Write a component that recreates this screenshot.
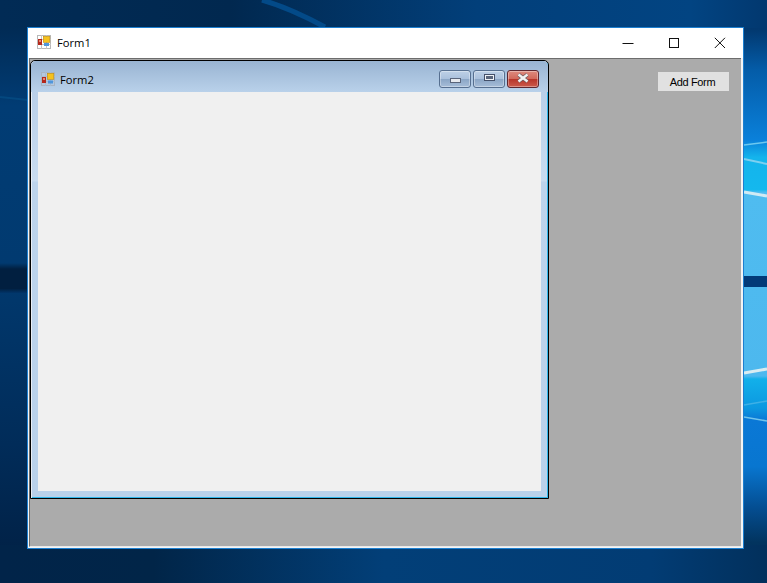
<div class="desktop">
  <svg class="wallpaper" width="767" height="583" viewBox="0 0 767 583" aria-hidden="true">
    <defs>
      <linearGradient id="base" x1="0" y1="0" x2="1" y2="0">
        <stop offset="0" stop-color="#012b55" />
        <stop offset="0.3" stop-color="#01284f" />
        <stop offset="0.62" stop-color="#023f7a" />
        <stop offset="0.9" stop-color="#024482" />
        <stop offset="1" stop-color="#02386f" />
      </linearGradient>
      <linearGradient id="left" x1="0" y1="0" x2="0" y2="1">
        <stop offset="0" stop-color="#012b55" />
        <stop offset="0.14" stop-color="#013c74" />
        <stop offset="0.42" stop-color="#013a70" />
        <stop offset="0.75" stop-color="#012c59" />
        <stop offset="1" stop-color="#011f42" />
      </linearGradient>
      <linearGradient id="band" x1="0" y1="0" x2="0" y2="1">
        <stop offset="0" stop-color="#013a70" />
        <stop offset="0.2" stop-color="#011f40" />
        <stop offset="0.85" stop-color="#011f40" />
        <stop offset="1" stop-color="#013468" />
      </linearGradient>
      <linearGradient id="bottom" x1="0" y1="0" x2="1" y2="0">
        <stop offset="0" stop-color="#012449" />
        <stop offset="0.2" stop-color="#012548" />
        <stop offset="0.5" stop-color="#023f78" />
        <stop offset="0.85" stop-color="#023c74" />
        <stop offset="1" stop-color="#02305c" />
      </linearGradient>
      <linearGradient id="right" x1="0" y1="0" x2="0" y2="1">
        <stop offset="0" stop-color="#02386f" />
        <stop offset="0.05" stop-color="#02386f" />
        <stop offset="0.12" stop-color="#045ca8" />
        <stop offset="0.24" stop-color="#0a80da" />
        <stop offset="0.27" stop-color="#14b4ec" />
        <stop offset="0.325" stop-color="#14b8ee" />
        <stop offset="0.33" stop-color="#4fbcf0" />
        <stop offset="0.645" stop-color="#4db8ee" />
        <stop offset="0.65" stop-color="#12b0ea" />
        <stop offset="0.7" stop-color="#0c98e0" />
        <stop offset="0.72" stop-color="#0a78d6" />
        <stop offset="0.8" stop-color="#0876d0" />
        <stop offset="0.87" stop-color="#044e92" />
        <stop offset="0.93" stop-color="#02345f" />
        <stop offset="1" stop-color="#012a55" />
      </linearGradient>
    </defs>
    <rect y="28" width="30" height="555" fill="url(#left)" />
    <rect y="263" width="30" height="30" fill="url(#band)" />
    <rect x="740" y="0" width="27" height="583" fill="url(#right)" />
    <rect x="740" y="276" width="27" height="11" fill="#023a78" />
    <rect y="545" width="767" height="38" fill="url(#bottom)" />
    <rect width="767" height="28" fill="url(#base)" />
    <path d="M0 97 L28 100" stroke="#04487f" stroke-width="2" fill="none" />
    <path d="M262 0 Q 290 8 325 27" stroke="#034a88" stroke-width="5" fill="none" />
    <path d="M744 145 L767 142" stroke="#6cc8f0" stroke-width="1.5" fill="none" />
    <path d="M744 159 L767 164" stroke="#7cd0f0" stroke-width="2" fill="none" />
    <path d="M744 192 L767 196" stroke="#d0eaf4" stroke-width="3" fill="none" />
    <path d="M744 373 L767 369" stroke="#d8ecf2" stroke-width="3" fill="none" />
    <path d="M744 405 L767 401" stroke="#3eb0e6" stroke-width="1.5" fill="none" />
    <path d="M744 417 L767 421" stroke="#70c4ec" stroke-width="1.5" fill="none" />
  </svg>

  <section class="window">
    <header class="titlebar">
      <svg class="icon main-icon" width="14" height="14" viewBox="0 0 14 14" aria-hidden="true">
        <rect x="0.5" y="0.5" width="13" height="13" fill="#fff" stroke="#b8b8b8" />
        <path d="M0 4.5H14M0 9.5H14M4.5 0V14M9.5 0V14" stroke="#c4c4c4" />
        <rect x="1" y="4" width="4" height="6" fill="#b5281c" />
        <rect x="2" y="5" width="2" height="2" fill="#e88a70" />
        <rect x="6.3" y="1.3" width="6.5" height="6" fill="#f5c21e" stroke="#c08a10" stroke-width="0.6" />
        <rect x="7" y="8" width="5" height="3" fill="#4f96dc" />
      </svg>
      <span class="title">Form1</span>
      <div class="caption">
        <span class="cap"><svg width="12" height="12" viewBox="0 0 12 12"><path d="M0.5 6.5H11.5" stroke="#111" /></svg></span>
        <span class="cap"><svg width="12" height="12" viewBox="0 0 12 12"><rect x="1.5" y="1.5" width="9" height="9" fill="none" stroke="#111" /></svg></span>
        <span class="cap"><svg width="12" height="12" viewBox="0 0 12 12"><path d="M0.8 0.8L11 11M11 0.8L0.8 11" stroke="#111" /></svg></span>
      </div>
    </header>
    <div class="mdi">
      <button class="add" type="button">Add Form</button>
      <section class="child">
        <header class="child-title">
          <svg class="icon" width="14" height="14" viewBox="0 0 14 14" aria-hidden="true">
            <rect x="0.5" y="0.5" width="13" height="13" fill="#b4c8df" stroke="#a8b4c2" />
            <path d="M0 4.5H14M0 9.5H14M4.5 0V14M9.5 0V14" stroke="#a9bbd0" />
            <rect x="1" y="5" width="4" height="6" fill="#b5281c" />
            <rect x="2" y="6" width="2" height="2" fill="#e88a70" />
            <rect x="6.3" y="1.3" width="6.5" height="6" fill="#f5c21e" stroke="#c08a10" stroke-width="0.6" />
            <rect x="7" y="8.5" width="5" height="3" fill="#4f96dc" />
          </svg>
          <span class="child-name">Form2</span>
          <div class="child-caption">
            <span class="cb"><i class="glyph-min"></i></span>
            <span class="cb"><i class="glyph-max"></i></span>
            <span class="cb close">
              <svg class="glyph-x" width="14" height="10" viewBox="0 0 14 10" aria-hidden="true">
                <path d="M2.5 1.5L11.5 8.5M11.5 1.5L2.5 8.5" stroke="#6b5a5f" stroke-width="3.8" />
                <path d="M2.5 1.5L11.5 8.5M11.5 1.5L2.5 8.5" stroke="#f2f2f2" stroke-width="2.4" />
              </svg>
            </span>
          </div>
        </header>
        <div class="client"></div>
      </section>
    </div>
  </section>
</div>

<style>
  :global(body) {
    margin: 0;
    background: #012b55;
  }
  .desktop {
    position: relative;
    width: 767px;
    height: 583px;
    overflow: hidden;
  }
  .wallpaper {
    position: absolute;
    inset: 0;
    display: block;
  }
  .window {
    position: absolute;
    left: 27px;
    top: 27px;
    width: 717px;
    height: 522px;
    box-sizing: border-box;
    border: 1px solid #1c7fd0;
    background: #f4f4f4;
    display: flex;
    flex-direction: column;
  }
  .titlebar {
    height: 30px;
    flex: none;
    background: #fff;
    display: flex;
    align-items: center;
    padding-left: 9px;
    gap: 6px;
    font: 11.2px "Open Sans", "Liberation Sans", sans-serif;
    color: #000;
  }
  .main-icon {
    margin-bottom: 2px;
  }
  .title {
    line-height: 30px;
  }
  .caption {
    margin-left: auto;
    display: flex;
  }
  .cap {
    width: 46px;
    height: 30px;
    display: flex;
    align-items: center;
    justify-content: center;
  }
  .mdi {
    flex: 1;
    position: relative;
    margin: 0 2px 1px 1px;
    background: #ababab;
    border-top: 1px solid #6d6d6d;
    border-left: 1px solid #6d6d6d;
    border-bottom: 1px solid #e8e8e8;
    display: flex;
    justify-content: flex-end;
    align-items: flex-start;
    padding: 13px 12px 0 0;
  }
  .add {
    width: 71px;
    height: 19px;
    padding: 0 2px 0 0;
    border: 0;
    background: #e1e1e1;
    color: #000;
    font: 11px "Liberation Sans", sans-serif;
    letter-spacing: -0.35px;
  }
  .child {
    position: absolute;
    left: 0;
    top: 1px;
    width: 519px;
    height: 439px;
    box-sizing: border-box;
    border: 1px solid #000;
    border-radius: 5px 5px 0 0;
    box-shadow: inset 1px 1px 0 #e8eef6, inset -1px -1px 0 #2fb6ea;
    background: linear-gradient(to bottom, #b4cbe6 0, #c9dcf0 120px, #bdd4ec 121px, #b9d1ea 100%);
    padding: 0 7px 7px 7px;
    display: flex;
    flex-direction: column;
  }
  .child-title {
    flex: none;
    height: 31px;
    margin: 0 -7px;
    padding: 5px 9px 0 10px;
    border-radius: 5px 5px 0 0;
    background: linear-gradient(to bottom, #99b4d2, #b9d1ea);
    display: flex;
    align-items: center;
    gap: 5px;
    font: 11.2px "Open Sans", "Liberation Sans", sans-serif;
    color: #000;
    box-sizing: border-box;
  }
  .child-caption {
    margin-left: auto;
    align-self: flex-start;
    margin-top: 4px;
    display: flex;
    gap: 2px;
  }
  .cb {
    width: 32px;
    height: 18px;
    box-sizing: border-box;
    border: 1px solid #566f90;
    border-radius: 3px;
    background: linear-gradient(to bottom, #bdd0e6 0, #a9c0dc 50%, #8ba6c6 52%, #a6bdd8 100%);
    box-shadow: inset 0 0 0 1px rgba(255, 255, 255, 0.35);
    display: flex;
    align-items: center;
    justify-content: center;
  }
  .cb.close {
    border-color: #5e2730;
    background: linear-gradient(to bottom, #dd8a7e 0, #d2685a 50%, #b8352a 52%, #cb5a4c 100%);
  }
  .glyph-min {
    width: 11px;
    height: 5px;
    margin-top: 3px;
    box-sizing: border-box;
    background: #e6e9ee;
    border: 1px solid #59647a;
  }
  .glyph-max {
    width: 11px;
    height: 7px;
    margin-top: -3px;
    box-sizing: border-box;
    background: #59647a;
    border: 1px solid #44506a;
    box-shadow: inset 0 0 0 1px #eef1f5;
  }
  .glyph-x {
    margin-top: -2px;
  }
  .client {
    flex: 1;
    background: #f0f0f0;
  }
</style>
